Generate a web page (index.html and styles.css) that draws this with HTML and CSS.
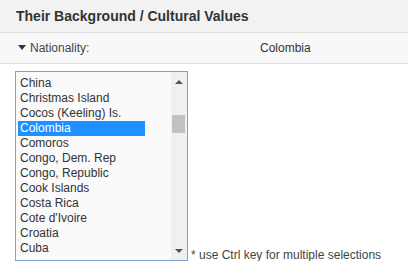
FILE: index.html
```html
<!DOCTYPE html>
<html lang="en">
<head>
    <meta charset="UTF-8">
    <title>Their Background / Cultural Values</title>
    <link rel="stylesheet" href="styles.css">
</head>
<body>
    <div class="panel-head">Their Background / Cultural Values</div>

    <div class="field-row">
        <div class="field-label"><span class="caret"></span>Nationality:</div>
        <div class="field-value">Colombia</div>
    </div>

    <div class="picker">
        <div class="listbox">
            <ul class="options">
                <li>China</li>
                <li>Christmas Island</li>
                <li>Cocos (Keeling) Is.</li>
                <li class="selected">Colombia</li>
                <li>Comoros</li>
                <li>Congo, Dem. Rep</li>
                <li>Congo, Republic</li>
                <li>Cook Islands</li>
                <li>Costa Rica</li>
                <li>Cote d'Ivoire</li>
                <li>Croatia</li>
                <li>Cuba</li>
            </ul>
            <div class="scrollbar">
                <span class="arrow-up"></span>
                <span class="thumb"></span>
                <span class="arrow-down"></span>
            </div>
        </div>
        <span class="hint">* use Ctrl key for multiple selections</span>
    </div>
</body>
</html>
```

FILE: styles.css
```css
body {
    font-family: "Liberation Sans", Arial, sans-serif;
    margin: 0;
    color: #333;
    background: #fff;
}
.panel-head {
    background-color: #f2f2f2;
    border-bottom: 1px solid #dcdcdc;
    height: 32px;
    line-height: 32px;
    padding-left: 16px;
    font-size: 14px;
    font-weight: bold;
}
.field-row {
    display: flex;
    background-color: #f8f8f8;
    border-bottom: 1px solid #dcdcdc;
    height: 30px;
    line-height: 30px;
    font-size: 12px;
}
.field-label {
    width: 242px;
    padding-left: 18px;
    color: #444;
}
.caret {
    display: inline-block;
    width: 0;
    height: 0;
    border-left: 4px solid transparent;
    border-right: 4px solid transparent;
    border-top: 5px solid #333;
    margin-right: 4px;
    vertical-align: 2px;
}
.picker {
    display: flex;
    align-items: flex-end;
    padding: 7px 0 0 15px;
}
.listbox {
    display: flex;
    width: 171px;
    border: 1px solid #7da2ce;
    background-color: #fafafa;
}
.options {
    list-style: none;
    margin: 0;
    padding: 4px 0 4px 2px;
    width: 153px;
}
.options li {
    width: 125px;
    height: 15px;
    line-height: 15px;
    padding-left: 2px;
    font-size: 12px;
    white-space: nowrap;
}
.options li.selected {
    background-color: #1e90ff;
    color: #fff;
}
.scrollbar {
    position: relative;
    width: 16px;
    background-color: #f0f0f0;
}
.arrow-up,
.arrow-down {
    position: absolute;
    left: 4px;
    width: 0;
    height: 0;
    border-left: 4px solid transparent;
    border-right: 4px solid transparent;
}
.arrow-up {
    top: 8px;
    border-bottom: 4px solid #555;
}
.arrow-down {
    bottom: 7px;
    border-top: 4px solid #555;
}
.thumb {
    position: absolute;
    top: 43px;
    left: 1px;
    width: 13px;
    height: 18px;
    background-color: #c1c1c1;
}
.hint {
    font-size: 12px;
    margin-left: 3px;
    margin-bottom: -1px;
    color: #444;
}
```
